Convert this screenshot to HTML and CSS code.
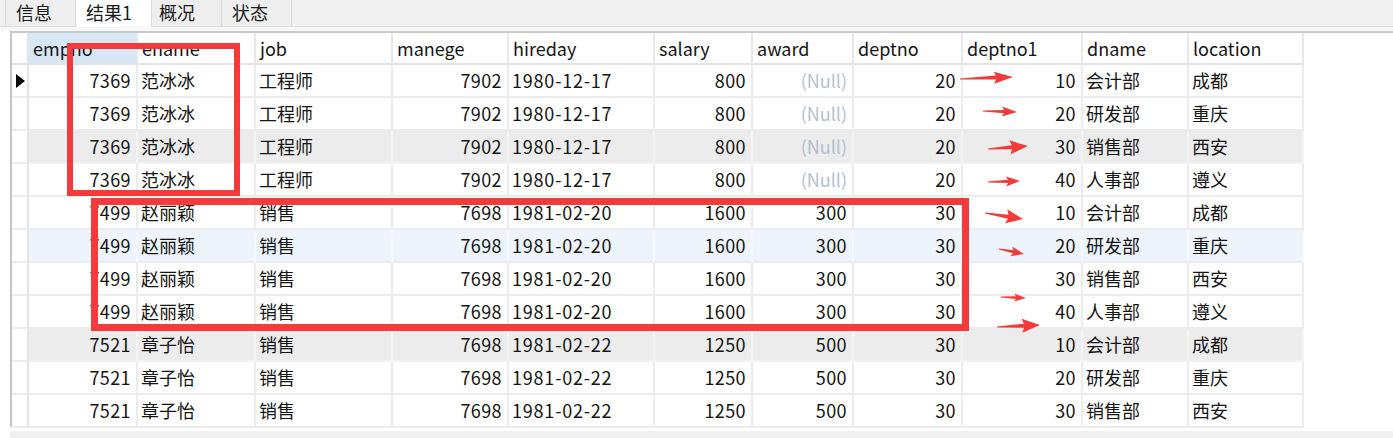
FILE: index.html
```html
<!DOCTYPE html>
<html lang="zh-CN">
<head>
<meta charset="utf-8">
<title>结果1</title>
<link rel="stylesheet" href="styles.css">
</head>
<body>
<div class="tabbar">
  <div class="tab t1">信息</div>
  <div class="tab t2 active">结果1</div>
  <div class="tab t3">概况</div>
  <div class="tab t4">状态</div>
</div>
<div class="band"></div>
<div class="frame">
  <div class="row head">
    <div class="cell ind"></div>
    <div class="cell sel">empno</div>
    <div class="cell">ename</div>
    <div class="cell">job</div>
    <div class="cell">manege</div>
    <div class="cell">hireday</div>
    <div class="cell">salary</div>
    <div class="cell">award</div>
    <div class="cell">deptno</div>
    <div class="cell">deptno1</div>
    <div class="cell">dname</div>
    <div class="cell">location</div>
  </div>
  <div class="row">
    <div class="cell ind"><span class="cur"></span></div>
    <div class="cell num">7369</div><div class="cell">范冰冰</div><div class="cell">工程师</div><div class="cell num">7902</div><div class="cell date">1980-12-17</div><div class="cell num">800</div><div class="cell num null">(Null)</div><div class="cell num">20</div><div class="cell num">10</div><div class="cell">会计部</div><div class="cell">成都</div>
  </div>
  <div class="row">
    <div class="cell ind"></div>
    <div class="cell num">7369</div><div class="cell">范冰冰</div><div class="cell">工程师</div><div class="cell num">7902</div><div class="cell date">1980-12-17</div><div class="cell num">800</div><div class="cell num null">(Null)</div><div class="cell num">20</div><div class="cell num">20</div><div class="cell">研发部</div><div class="cell">重庆</div>
  </div>
  <div class="row gray">
    <div class="cell ind"></div>
    <div class="cell num">7369</div><div class="cell">范冰冰</div><div class="cell">工程师</div><div class="cell num">7902</div><div class="cell date">1980-12-17</div><div class="cell num">800</div><div class="cell num null">(Null)</div><div class="cell num">20</div><div class="cell num">30</div><div class="cell">销售部</div><div class="cell">西安</div>
  </div>
  <div class="row">
    <div class="cell ind"></div>
    <div class="cell num">7369</div><div class="cell">范冰冰</div><div class="cell">工程师</div><div class="cell num">7902</div><div class="cell date">1980-12-17</div><div class="cell num">800</div><div class="cell num null">(Null)</div><div class="cell num">20</div><div class="cell num">40</div><div class="cell">人事部</div><div class="cell">遵义</div>
  </div>
  <div class="row">
    <div class="cell ind"></div>
    <div class="cell num">7499</div><div class="cell">赵丽颖</div><div class="cell">销售</div><div class="cell num">7698</div><div class="cell date">1981-02-20</div><div class="cell num">1600</div><div class="cell num">300</div><div class="cell num">30</div><div class="cell num">10</div><div class="cell">会计部</div><div class="cell">成都</div>
  </div>
  <div class="row blue">
    <div class="cell ind"></div>
    <div class="cell num">7499</div><div class="cell">赵丽颖</div><div class="cell">销售</div><div class="cell num">7698</div><div class="cell date">1981-02-20</div><div class="cell num">1600</div><div class="cell num">300</div><div class="cell num">30</div><div class="cell num">20</div><div class="cell">研发部</div><div class="cell">重庆</div>
  </div>
  <div class="row">
    <div class="cell ind"></div>
    <div class="cell num">7499</div><div class="cell">赵丽颖</div><div class="cell">销售</div><div class="cell num">7698</div><div class="cell date">1981-02-20</div><div class="cell num">1600</div><div class="cell num">300</div><div class="cell num">30</div><div class="cell num">30</div><div class="cell">销售部</div><div class="cell">西安</div>
  </div>
  <div class="row">
    <div class="cell ind"></div>
    <div class="cell num">7499</div><div class="cell">赵丽颖</div><div class="cell">销售</div><div class="cell num">7698</div><div class="cell date">1981-02-20</div><div class="cell num">1600</div><div class="cell num">300</div><div class="cell num">30</div><div class="cell num">40</div><div class="cell">人事部</div><div class="cell">遵义</div>
  </div>
  <div class="row gray">
    <div class="cell ind"></div>
    <div class="cell num">7521</div><div class="cell">章子怡</div><div class="cell">销售</div><div class="cell num">7698</div><div class="cell date">1981-02-22</div><div class="cell num">1250</div><div class="cell num">500</div><div class="cell num">30</div><div class="cell num">10</div><div class="cell">会计部</div><div class="cell">成都</div>
  </div>
  <div class="row">
    <div class="cell ind"></div>
    <div class="cell num">7521</div><div class="cell">章子怡</div><div class="cell">销售</div><div class="cell num">7698</div><div class="cell date">1981-02-22</div><div class="cell num">1250</div><div class="cell num">500</div><div class="cell num">30</div><div class="cell num">20</div><div class="cell">研发部</div><div class="cell">重庆</div>
  </div>
  <div class="row">
    <div class="cell ind"></div>
    <div class="cell num">7521</div><div class="cell">章子怡</div><div class="cell">销售</div><div class="cell num">7698</div><div class="cell date">1981-02-22</div><div class="cell num">1250</div><div class="cell num">500</div><div class="cell num">30</div><div class="cell num">30</div><div class="cell">销售部</div><div class="cell">西安</div>
  </div>
</div>
<div class="hscroll"></div>

<div class="mark box1"></div>
<div class="mark box2"></div>
<svg class="arrows" width="1393" height="438" viewBox="0 0 1393 438" xmlns="http://www.w3.org/2000/svg">
  <g fill="#f23a3a">
    <polygon transform="translate(960,79) rotate(-2.2)" points="0,-0.6 36,-2 34,-6 53,0 34,6 36,2 0,0.6"/>
    <polygon transform="translate(983,111) rotate(1.7)" points="0,-0.5 21,-1.6 19,-5 34,0 19,5 21,1.6 0,0.5"/>
    <polygon transform="translate(988,149) rotate(-4.3)" points="0,-0.6 24,-2 22,-7 40,0 22,7 24,2 0,0.6"/>
    <polygon transform="translate(988,182) rotate(-1.8)" points="0,-0.5 20,-1.6 18,-5 32,0 18,5 20,1.6 0,0.5"/>
    <polygon transform="translate(985,213) rotate(9)" points="0,-0.6 23.5,-2 21.5,-7 38.5,0 21.5,7 23.5,2 0,0.6"/>
    <polygon transform="translate(999,249) rotate(11.3)" points="0,-0.5 14.5,-1.5 12.5,-5 25.5,0 12.5,5 14.5,1.5 0,0.5"/>
    <polygon transform="translate(1001,297) rotate(2.3)" points="0,-0.5 15,-1.4 13,-4 25,0 13,4 15,1.4 0,0.5"/>
    <polygon transform="translate(997,327) rotate(-2.7)" points="0,-0.6 27,-2 25,-7 43,0 25,7 27,2 0,0.6"/>
  </g>
</svg>
</body>
</html>
```

FILE: styles.css
```css
html, body {
  margin: 0;
  padding: 0;
  background: #ffffff;
}
body {
  position: relative;
  width: 1393px;
  height: 438px;
  overflow: hidden;
  font-family: "Noto Sans CJK SC", "Noto Sans", sans-serif;
  font-size: 18px;
  color: #151515;
}

/* tabs */
.tabbar {
  display: flex;
  height: 26px;
  background: #f0f0f0;
  border-bottom: 1px solid #dcdcdc;
  padding-left: 5px;
}
.tab {
  box-sizing: border-box;
  height: 26px;
  line-height: 24px;
  padding-left: 10px;
  border-right: 1px solid #dadada;
  background: #eeeeee;
  color: #1a1a1a;
}
.tab.t1 { width: 71px; border-left: 1px solid #dadada; }
.tab.t2 { width: 76px; }
.tab.t3 { width: 70px; padding-left: 7px; }
.tab.t4 { width: 70px; }
.tab.active {
  background: #ffffff;
  height: 27px;
  margin-bottom: -1px;
  position: relative;
}

.band {
  height: 4px;
  background: #f8f8f8;
}

/* grid */
.frame {
  margin-left: 10px;
  border-top: 2px solid #c9c9c9;
  border-left: 2px solid #c6c6c6;
  height: 394px;
}
.row {
  display: grid;
  grid-template-columns: 17px 109px 118px 137px 116px 146px 98px 101px 109px 120px 106px 115px;
  height: 33px;
}
.row.head {
  height: 32px;
}
.cell {
  box-sizing: border-box;
  border-right: 2px solid #ececec;
  border-bottom: 2px solid #ececec;
  padding: 0 5px 0 3px;
  line-height: 31px;
  white-space: nowrap;
  overflow: hidden;
}
.head .cell {
  line-height: 30px;
  padding-left: 4px;
  border-bottom-color: #e3e3e3;
  border-right-color: #e8e8e8;
}
.head .cell.sel {
  background: #d8e7f6;
}
.cell.num {
  text-align: right;
  letter-spacing: 0.4px;
}
.cell.date {
  letter-spacing: 0.8px;
}
.cell.null {
  color: #b4bfd3;
  letter-spacing: 0;
}
.cell.ind {
  padding: 0;
  background: #ffffff;
  border-right-color: #e4e4e4;
  display: flex;
  align-items: center;
  justify-content: center;
}
.row.gray .cell { background: #ececec; border-right-color: #f4f4f4; border-bottom-color: #f2f2f2; }
.row.blue .cell { background: #edf4fc; border-right-color: #f6f9fd; }
.row.gray .cell.ind, .row.blue .cell.ind { background: #ffffff; border-right-color: #e4e4e4; border-bottom-color: #ececec; }

.cur {
  width: 0;
  height: 0;
  border-left: 9px solid #000;
  border-top: 7px solid transparent;
  border-bottom: 7px solid transparent;
  margin-left: 2px;
}

.hscroll {
  margin: 4px 0 0 10px;
  height: 7px;
  background: #f0f0f0;
}

/* annotations drawn over the grid */
.mark {
  position: absolute;
  box-sizing: border-box;
  border: 6px solid #f43a3a;
}
.box1 {
  left: 67px;
  top: 43px;
  width: 173px;
  height: 153px;
}
.box2 {
  left: 91px;
  top: 198px;
  width: 878px;
  height: 133px;
  border-width: 7px;
}
.arrows {
  position: absolute;
  left: 0;
  top: 0;
  pointer-events: none;
}
```
